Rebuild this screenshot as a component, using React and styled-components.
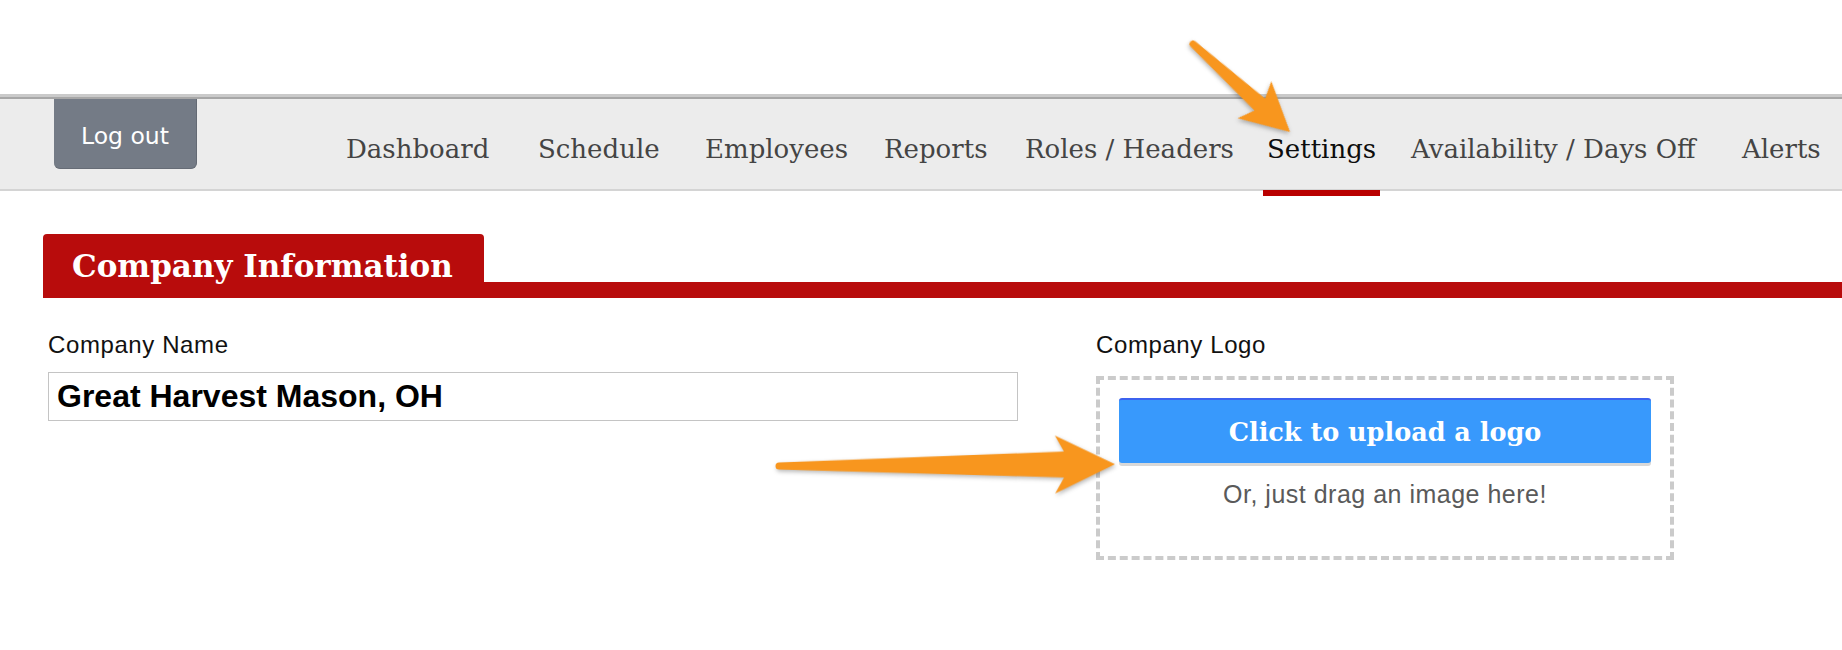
import React from 'react';
import styled, { createGlobalStyle } from 'styled-components';

const GlobalStyle = createGlobalStyle`
  html, body { margin: 0; padding: 0; background: #ffffff; }
  body {
    width: 1842px;
    height: 650px;
    overflow: hidden;
    font-family: "Liberation Sans", Arial, sans-serif;
  }
  * { box-sizing: border-box; }
`;

const Page = styled.div`
  position: relative;
  width: 1842px;
  height: 650px;
  padding-top: 94px;
`;

const NavBar = styled.nav`
  display: flex;
  align-items: flex-start;
  height: 97px;
  background: #ececec;
  border-top: 3px solid #cacaca;
  border-bottom: 2px solid #d4d4d4;
  box-shadow: inset 0 2px 0 #a7a7a7;
`;

const LogoutButton = styled.button`
  margin: 2px 0 0 54px;
  width: 143px;
  height: 70px;
  padding: 4px 0 0;
  background: #747b86;
  border: none;
  border-right: 1px solid #646a74;
  border-bottom: 1px solid #666c76;
  border-radius: 0 0 6px 6px;
  color: #ffffff;
  font-family: "DejaVu Sans", Verdana, sans-serif;
  font-size: 23.5px;
  cursor: pointer;
`;

const NavLinks = styled.ul`
  display: flex;
  margin: 0 0 0 145px;
  padding: 0;
  list-style: none;
  height: 100%;
`;

const NavItem = styled.li`
  width: ${(p) => p.$w}px;
  padding-top: 37px;
  flex: none;
`;

const NavText = styled.a`
  position: relative;
  display: inline-block;
  padding: 0 4px;
  font-family: "DejaVu Serif", Georgia, serif;
  font-size: 26px;
  line-height: 30px;
  white-space: nowrap;
  color: ${(p) => (p.$active ? '#0d0d0d' : '#444444')};
  text-decoration: none;

  &::after {
    content: '';
    display: ${(p) => (p.$active ? 'block' : 'none')};
    position: absolute;
    left: 0;
    right: 0;
    top: 56px;
    height: 6px;
    background: #b90000;
  }
`;

const SectionHeader = styled.div`
  display: flex;
  align-items: flex-end;
  margin: 43px 0 0 43px;
`;

const Tab = styled.h2`
  margin: 0;
  padding: 14px 31px 14px 29px;
  background: #b80c0c;
  color: #ffffff;
  border-radius: 4px 4px 0 0;
  font-family: "DejaVu Serif", Georgia, serif;
  font-weight: bold;
  font-size: 31px;
  line-height: 36px;
  white-space: nowrap;
`;

const HeaderRule = styled.div`
  flex: 1;
  height: 16px;
  background: #b80c0c;
`;

const FormRow = styled.div`
  display: flex;
  margin-left: 48px;
`;

const Field = styled.div`
  width: ${(p) => p.$w}px;
  margin-left: ${(p) => p.$ml || 0}px;
  display: flex;
  flex-direction: column;
`;

const Label = styled.label`
  margin-top: 33px;
  font-size: 24px;
  line-height: 28px;
  letter-spacing: 0.6px;
  color: #111111;
`;

const TextInput = styled.input`
  margin-top: 13px;
  width: 100%;
  height: 49px;
  padding: 0 8px;
  border: 1px solid #c4c4c4;
  font-family: "Liberation Sans", Arial, sans-serif;
  font-weight: bold;
  font-size: 32px;
  color: #000000;
  background: #ffffff;
  outline: none;
`;

const DropZone = styled.div`
  margin-top: 17px;
  height: 184px;
  padding: 18px 19px 0;
  border: 4px dashed #cbcbcb;
  display: flex;
  flex-direction: column;
`;

const UploadButton = styled.button`
  height: 65px;
  display: flex;
  align-items: center;
  justify-content: center;
  background: #3899fc;
  border: none;
  border-top: 2px solid #3c62ef;
  border-radius: 3px;
  box-shadow: 0 3px 0 #d8d8d8;
  color: #ffffff;
  font-family: "DejaVu Serif", Georgia, serif;
  font-weight: bold;
  font-size: 25.5px;
  cursor: pointer;
`;

const DragHint = styled.p`
  margin: 16px 0 0;
  text-align: center;
  font-size: 25px;
  line-height: 30px;
  letter-spacing: 0.5px;
  color: #5a5a5a;
`;

const AnnotationLayer = styled.svg`
  position: absolute;
  top: 0;
  left: 0;
  width: 1842px;
  height: 650px;
  pointer-events: none;
  overflow: visible;
`;

const navItems = [
  { label: 'Dashboard', w: 192 },
  { label: 'Schedule', w: 167 },
  { label: 'Employees', w: 179 },
  { label: 'Reports', w: 141 },
  { label: 'Roles / Headers', w: 242 },
  { label: 'Settings', w: 144, active: true },
  { label: 'Availability / Days Off', w: 331 },
  { label: 'Alerts', w: 100 },
];

function Arrow({ x, y, angle, len, head, wing, neck, tail }) {
  const b = len - head;
  const j = b + head * 0.15;
  const d = `M0,${-tail} L${j},${-neck} L${b},${-wing} L${len},0 L${b},${wing} L${j},${neck} L0,${tail} A${tail},${tail} 0 0 1 0,${-tail} Z`;
  return (
    <path
      d={d}
      fill="#f8961e"
      transform={`translate(${x} ${y}) rotate(${angle})`}
      style={{ filter: 'drop-shadow(1px 2px 2px rgba(0,0,0,0.28))' }}
    />
  );
}

export default function App() {
  return (
    <>
      <GlobalStyle />
      <Page>
        <NavBar>
          <LogoutButton>Log out</LogoutButton>
          <NavLinks>
            {navItems.map((it) => (
              <NavItem key={it.label} $w={it.w}>
                <NavText $active={it.active}>{it.label}</NavText>
              </NavItem>
            ))}
          </NavLinks>
        </NavBar>

        <SectionHeader>
          <Tab>Company Information</Tab>
          <HeaderRule />
        </SectionHeader>

        <FormRow>
          <Field $w={970}>
            <Label>Company Name</Label>
            <TextInput defaultValue="Great Harvest Mason, OH" readOnly />
          </Field>
          <Field $w={578} $ml={78}>
            <Label>Company Logo</Label>
            <DropZone>
              <UploadButton>Click to upload a logo</UploadButton>
              <DragHint>Or, just drag an image here!</DragHint>
            </DropZone>
          </Field>
        </FormRow>

        <AnnotationLayer viewBox="0 0 1842 650">
          <Arrow x={1193} y={44} angle={42.2} len={131} head={48} wing={25} neck={8} tail={3.5} />
          <Arrow x={779} y={466} angle={-0.3} len={336} head={60} wing={29} neck={13} tail={3.5} />
        </AnnotationLayer>
      </Page>
    </>
  );
}
